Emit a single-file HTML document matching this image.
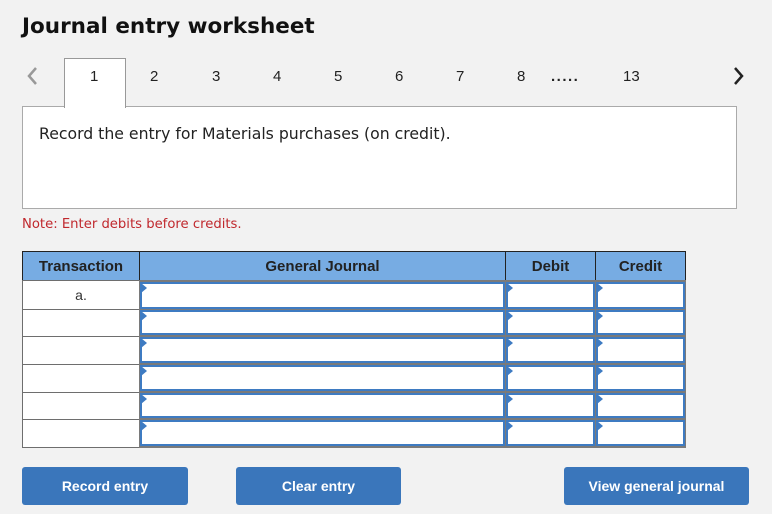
<!DOCTYPE html>
<html><head><meta charset="utf-8"><style>
*{margin:0;padding:0;box-sizing:border-box}
body{width:772px;height:514px;background:#f2f2f2;position:relative;overflow:hidden;font-family:"DejaVu Sans",Verdana,sans-serif}
.a{position:absolute}
h1{position:absolute;left:22px;top:14px;font-size:21.5px;font-weight:bold;color:#111}
.tab{position:absolute;top:68px;font-family:"Liberation Sans",Arial,sans-serif;font-size:15px;color:#222}
.btn{position:absolute;top:467px;height:38px;background:#3a76bb;border-radius:3px;color:#fff;font-family:"Liberation Sans",Arial,sans-serif;font-weight:bold;font-size:14px;text-align:center;line-height:38px}
.th{position:absolute;top:251px;height:30px;background:#77ace3;border:1px solid #222;font-family:"Liberation Sans",Arial,sans-serif;font-weight:bold;font-size:15px;color:#222;text-align:center;line-height:29px}
.cell{position:absolute;background:#fff;border:1px solid #6e6e6e}
.in{position:absolute;background:#fff;border:2px solid #3e7bc2}
.in:before{content:"";position:absolute;left:-1px;top:-1px;border-left:6px solid #3e7bc2;border-top:5px solid transparent;border-bottom:5px solid transparent;height:0;width:0}
</style></head><body>
<h1>Journal entry worksheet</h1>
<svg class="a" style="left:26px;top:66px" width="12" height="20"><path d="M10 2 L3 10 L10 18" stroke="#999" stroke-width="2.5" fill="none"/></svg>
<svg class="a" style="left:733px;top:66px" width="12" height="20"><path d="M2 2 L9 10 L2 18" stroke="#222" stroke-width="2.5" fill="none"/></svg>
<div class="a" style="left:64px;top:58px;width:62px;height:50px;background:#fff;border:1px solid #999;border-bottom:none;z-index:2"></div>
<div class="tab" style="left:90px;z-index:3">1</div>
<div class="tab" style="left:150px">2</div>
<div class="tab" style="left:212px">3</div>
<div class="tab" style="left:273px">4</div>
<div class="tab" style="left:334px">5</div>
<div class="tab" style="left:395px">6</div>
<div class="tab" style="left:456px">7</div>
<div class="tab" style="left:517px">8</div>
<div class="tab" style="left:551px;font-weight:bold;letter-spacing:1.5px">.....</div>
<div class="tab" style="left:623px">13</div>
<div class="a" style="left:22px;top:106px;width:715px;height:103px;background:#fff;border:1px solid #aaa;z-index:1"></div>
<div class="a" style="left:39px;top:124px;font-size:15.7px;color:#222;z-index:3">Record the entry for Materials purchases (on credit).</div>
<div class="a" style="left:22px;top:217px;font-size:13.2px;color:#c0282d">Note: Enter debits before credits.</div>

<div class="th" style="left:22px;width:118px">Transaction</div>
<div class="th" style="left:139px;width:367px">General Journal</div>
<div class="th" style="left:505px;width:91px">Debit</div>
<div class="th" style="left:595px;width:91px">Credit</div>

<div class="cell" style="left:22px;top:280px;width:118px;height:30px;text-align:center;font-family:'Liberation Sans',Arial,sans-serif;font-size:14px;line-height:28px;color:#333">a.</div>
<div class="cell" style="left:22px;top:309px;width:118px;height:28px"></div>
<div class="cell" style="left:22px;top:336px;width:118px;height:29px"></div>
<div class="cell" style="left:22px;top:364px;width:118px;height:29px"></div>
<div class="cell" style="left:22px;top:392px;width:118px;height:28px"></div>
<div class="cell" style="left:22px;top:419px;width:118px;height:29px"></div>
<div class="a" style="left:139px;top:280px;width:547px;height:168px;background:#7a7a7a"></div>

<div class="in" style="left:140px;top:282px;width:365px;height:27px"></div>
<div class="in" style="left:506px;top:282px;width:89px;height:27px"></div>
<div class="in" style="left:596px;top:282px;width:89px;height:27px"></div>
<div class="in" style="left:140px;top:310px;width:365px;height:25px"></div>
<div class="in" style="left:506px;top:310px;width:89px;height:25px"></div>
<div class="in" style="left:596px;top:310px;width:89px;height:25px"></div>
<div class="in" style="left:140px;top:337px;width:365px;height:26px"></div>
<div class="in" style="left:506px;top:337px;width:89px;height:26px"></div>
<div class="in" style="left:596px;top:337px;width:89px;height:26px"></div>
<div class="in" style="left:140px;top:365px;width:365px;height:26px"></div>
<div class="in" style="left:506px;top:365px;width:89px;height:26px"></div>
<div class="in" style="left:596px;top:365px;width:89px;height:26px"></div>
<div class="in" style="left:140px;top:393px;width:365px;height:25px"></div>
<div class="in" style="left:506px;top:393px;width:89px;height:25px"></div>
<div class="in" style="left:596px;top:393px;width:89px;height:25px"></div>
<div class="in" style="left:140px;top:420px;width:365px;height:26px"></div>
<div class="in" style="left:506px;top:420px;width:89px;height:26px"></div>
<div class="in" style="left:596px;top:420px;width:89px;height:26px"></div>

<div class="btn" style="left:22px;width:166px">Record entry</div>
<div class="btn" style="left:236px;width:165px">Clear entry</div>
<div class="btn" style="left:564px;width:185px">View general journal</div>
</body></html>
